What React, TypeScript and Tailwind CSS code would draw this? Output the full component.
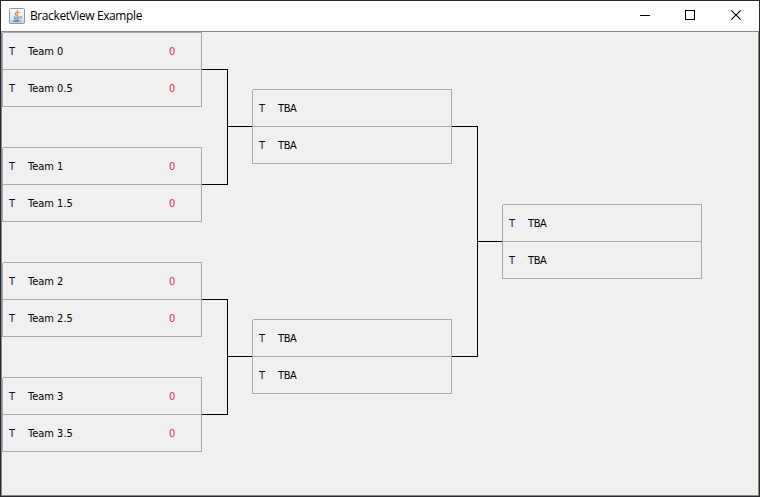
type Entry = { name: string; score?: string };

function Row({ name, score }: Entry) {
  return (
    <div className="flex h-[36px] items-center pt-[2px] pl-[6px] text-[11px] leading-[14px] text-black">
      <span className="w-[19px] text-[#101030]">T</span>
      <span className={score === undefined ? "tracking-[-0.4px]" : "w-[141px] whitespace-pre"}>{name}</span>
      {score !== undefined && <span className="text-[#e62e48]">{score}</span>}
    </div>
  );
}

function Match({ top, bottom }: { top: Entry; bottom: Entry }) {
  return (
    <div className="relative h-[75px] w-[200px] shrink-0 border border-[#a9a9a9]">
      <div className="absolute -top-px -left-px size-px bg-[#f0f0f0]" />
      <Row {...top} />
      <div className="h-px bg-[#a9a9a9]" />
      <Row {...bottom} />
    </div>
  );
}

function Connector({ tall = false }: { tall?: boolean }) {
  return (
    <div className={tall ? "flex h-[231px]" : "flex h-[116px]"}>
      <div className="w-[26px] border-y border-r border-black" />
      <div className={tall ? "mt-[115px] h-px w-[24px] bg-black" : "mt-[57px] h-px w-[24px] bg-black"} />
    </div>
  );
}

function JavaIcon() {
  return (
    <svg width="16" height="16" viewBox="0 0 16 16" fill="none" className="ml-[8px] shrink-0">
      <defs>
        <linearGradient id="tile" x1="0" y1="0" x2="0" y2="1">
          <stop offset="0" stopColor="#fafbfc" />
          <stop offset="0.6" stopColor="#e9edf1" />
          <stop offset="1" stopColor="#c4d0da" />
        </linearGradient>
      </defs>
      <rect x="0.5" y="0.5" width="15" height="15" rx="1" fill="url(#tile)" stroke="#8299ad" />
      <path d="M8.7 1.8C9.4 3.5 5.8 4.4 6.3 6.1C6.5 6.8 7.2 7.3 7.4 8M10.5 4.1C8.8 4.6 7.5 5.6 8.3 6.5C8.8 7.1 8.6 7.6 8.1 8" stroke="#ee8a32" strokeWidth="1.1" />
      <path d="M4.4 8.8C5.5 9.4 8.6 9.4 10.6 8.8M5.1 10.6C6.6 11.3 8.6 11.2 10.3 10.6M11.1 8.7C13.4 8 13.1 10.3 11.2 10.8M3.5 12.4C2.8 13.8 10.7 13.9 12.2 12.5M5.3 12.2H9.7" stroke="#557f9f" />
    </svg>
  );
}

const teams = ["0", "1", "2", "3"];
const tba: Entry = { name: "TBA" };

export default function App() {
  return (
    <div className="flex h-[497px] w-[760px] flex-col border border-[#2b292d] bg-white font-['DejaVu_Sans_Condensed','DejaVu_Sans',sans-serif]">
      <header className="flex h-[30px] shrink-0 items-center text-black">
        <JavaIcon />
        <h1 className="ml-[5px] font-['Open_Sans','Noto_Sans',sans-serif] text-[12px] leading-[16px] tracking-[-0.4px]">
          BracketView Example
        </h1>
        <div className="ml-auto flex">
          {["min", "max", "close"].map((kind) => (
            <svg key={kind} width="46" height="30" viewBox="0 0 46 30" fill="none" stroke="black">
              {kind === "min" && <path d="M19 14.5H29" />}
              {kind === "max" && <rect x="18.5" y="9.5" width="9" height="9" />}
              {kind === "close" && <path d="M18.3 9.3L27.7 18.7M27.7 9.3L18.3 18.7" strokeWidth="1.1" />}
            </svg>
          ))}
        </div>
      </header>
      <main className="flex flex-1 items-start border border-[#828690] bg-[#f0f0f0]">
        <section className="flex flex-col gap-[40px]">
          {teams.map((n) => (
            <Match
              key={n}
              top={{ name: `Team ${n}`, score: "0" }}
              bottom={{ name: `Team ${n}.5`, score: "0" }}
            />
          ))}
        </section>
        <div className="flex flex-col gap-[114px] pt-[37px]">
          <Connector />
          <Connector />
        </div>
        <section className="flex flex-col gap-[155px] pt-[57px]">
          <Match top={tba} bottom={tba} />
          <Match top={tba} bottom={tba} />
        </section>
        <div className="pt-[94px]">
          <Connector tall />
        </div>
        <section className="pt-[172px]">
          <Match top={tba} bottom={tba} />
        </section>
      </main>
    </div>
  );
}
